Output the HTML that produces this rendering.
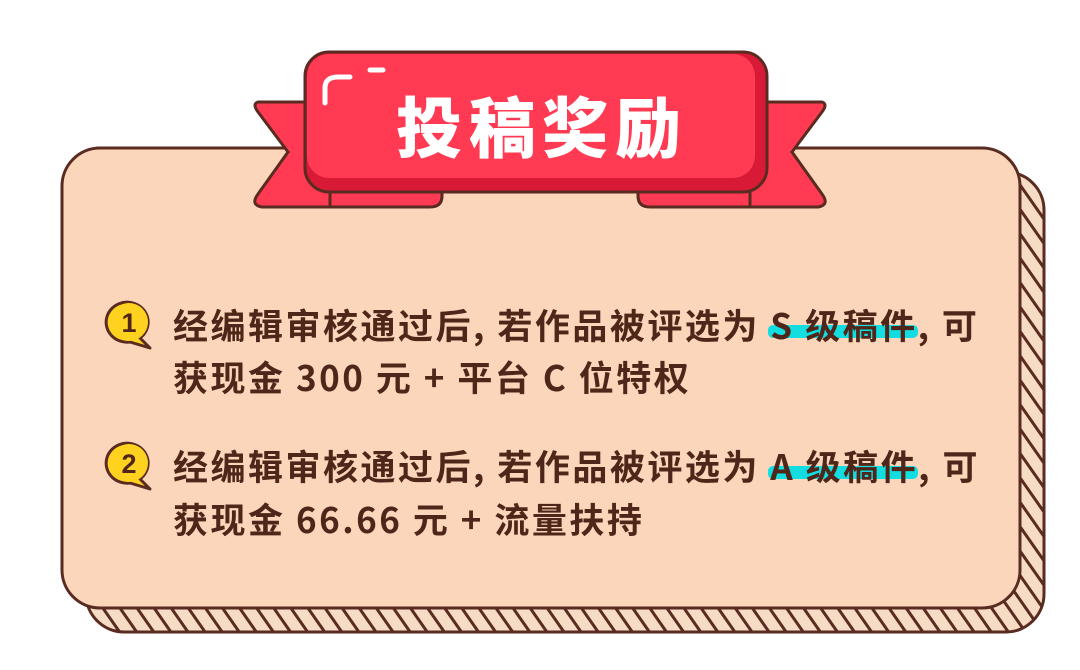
<!DOCTYPE html>
<html><head><meta charset="utf-8"><style>
body{margin:0;width:1080px;height:670px;background:#fff;position:relative;overflow:hidden;font-family:"Noto Sans CJK SC",sans-serif}
.t{position:absolute;left:173px;font-size:35px;font-weight:bold;color:#4f2619;line-height:44px;white-space:nowrap;letter-spacing:2.5px}
.hl{position:relative;z-index:0}
.hl:before{content:"";position:absolute;left:-2px;right:0px;top:26px;height:13px;background:#12dde0;border-radius:5px;z-index:-1}
.title{position:absolute;left:396px;top:82px;font-size:66px;font-weight:900;color:#fff;letter-spacing:7px;line-height:84px}
</style></head><body>
<svg width="1080" height="670" style="position:absolute;left:0;top:0">
<defs>
<pattern id="h" width="14" height="14" patternUnits="userSpaceOnUse" patternTransform="rotate(-35)">
<rect width="14" height="14" fill="#f6dcc4"/><rect width="3" height="14" fill="#5a2b20"/>
</pattern>
</defs>
<rect x="86" y="172" width="958" height="460" rx="38" fill="url(#h)" stroke="#5a2b20" stroke-width="3"/>
<rect x="62" y="148" width="958" height="460" rx="38" fill="#fcd6bb" stroke="#5a2b20" stroke-width="3"/>
<path d="M258 102 L330 102 L330 207 L262 207 Q250 205 258 194 L288 152 L258 112 Q252 104 258 102Z" fill="#ff3a52" stroke="#5a2b20" stroke-width="3"/>
<path d="M330 102 L430 102 Q442 102 442 114 L442 196 Q442 207 430 207 L330 207Z" fill="#ff3a52" stroke="#5a2b20" stroke-width="3"/>
<path d="M822 102 L750 102 L750 207 L818 207 Q830 205 822 194 L792 152 L822 112 Q828 104 822 102Z" fill="#ff3a52" stroke="#5a2b20" stroke-width="3"/>
<path d="M750 102 L650 102 Q638 102 638 114 L638 196 Q638 207 650 207 L750 207Z" fill="#ff3a52" stroke="#5a2b20" stroke-width="3"/>
<rect x="305" y="52" width="462" height="140" rx="24" fill="#d81a36" stroke="#5a2b20" stroke-width="3"/>
<rect x="307" y="54" width="448" height="124" rx="22" fill="#ff3a52"/>
<path d="M325 103 L325 88 Q325 77 338 77 L350 77" fill="none" stroke="#fff" stroke-width="5" stroke-linecap="round"/>
<line x1="370" y1="70" x2="383" y2="70" stroke="#fff" stroke-width="5" stroke-linecap="round"/>
<g stroke="#5a2b20" stroke-width="3" fill="#ffd21f" stroke-linejoin="round">
<path d="M140 338 A21 20 0 1 0 130 342 L150 348 Z"/>
<path d="M140 479 A21 20 0 1 0 130 483 L150 489 Z"/>
</g>
<g stroke="none" fill="#ffd21f"><circle cx="129" cy="322" r="19"/><circle cx="129" cy="463" r="19"/></g>
<text x="129" y="332" font-size="27" font-weight="bold" fill="#4f2619" text-anchor="middle" font-family="Liberation Sans">1</text>
<text x="129" y="473" font-size="27" font-weight="bold" fill="#4f2619" text-anchor="middle" font-family="Liberation Sans">2</text>
</svg>
<div class="title">投稿奖励</div>
<div class="t" style="top:303px">经编辑审核通过后, 若作品被评选为 <span class="hl">S 级稿件</span>, 可</div>
<div class="t" style="top:355px">获现金 300 元 + 平台 C 位特权</div>
<div class="t" style="top:444px">经编辑审核通过后, 若作品被评选为 <span class="hl">A 级稿件</span>, 可</div>
<div class="t" style="top:497px">获现金 66.66 元 + 流量扶持</div>
</body></html>
